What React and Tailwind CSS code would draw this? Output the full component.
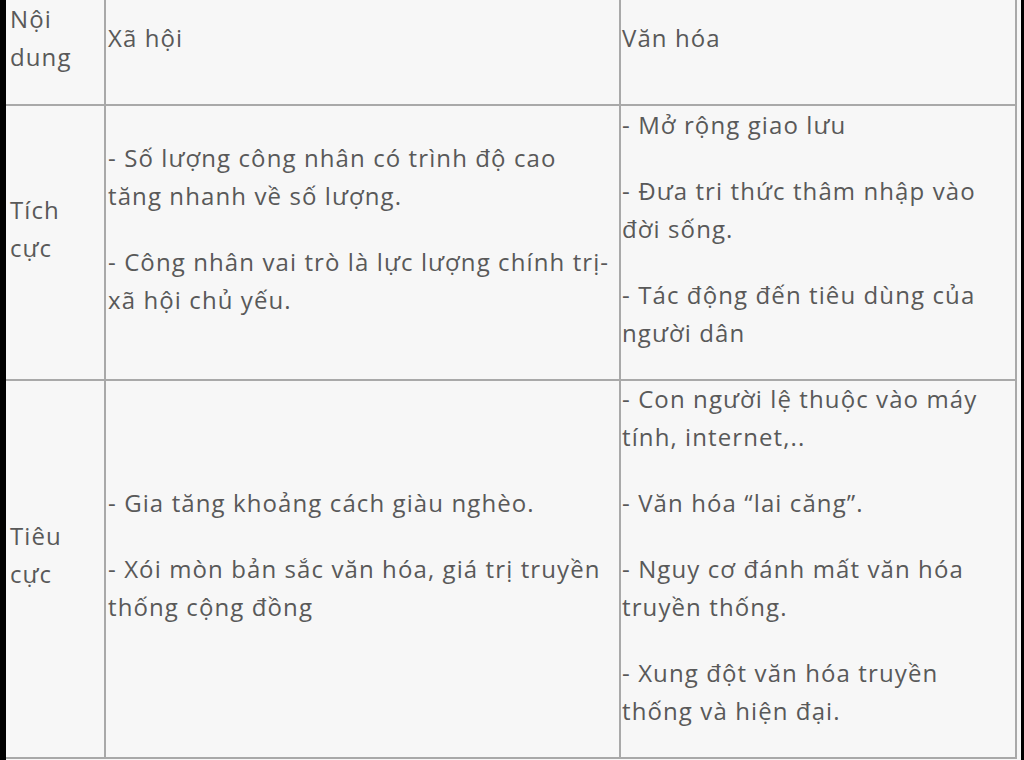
import React from 'react';

const rows = [
  {
    label: ['Nội', 'dung'],
    social: [['Xã hội']],
    culture: [['Văn hóa']],
  },
  {
    label: ['Tích', 'cực'],
    social: [
      ['- Số lượng công nhân có trình độ cao', 'tăng nhanh về số lượng.'],
      ['- Công nhân vai trò là lực lượng chính trị-', 'xã hội chủ yếu.'],
    ],
    culture: [
      ['- Mở rộng giao lưu'],
      ['- Đưa tri thức thâm nhập vào', 'đời sống.'],
      ['- Tác động đến tiêu dùng của', 'người dân'],
    ],
  },
  {
    label: ['Tiêu', 'cực'],
    social: [
      ['- Gia tăng khoảng cách giàu nghèo.'],
      ['- Xói mòn bản sắc văn hóa, giá trị truyền', 'thống cộng đồng'],
    ],
    culture: [
      ['- Con người lệ thuộc vào máy', 'tính, internet,..'],
      ['- Văn hóa “lai căng”.'],
      ['- Nguy cơ đánh mất văn hóa', 'truyền thống.'],
      ['- Xung đột văn hóa truyền', 'thống và hiện đại.'],
    ],
  },
];

const rowHeights = ['h-[106px]', 'h-[275px]', 'h-[378px]'];

function Para({ lines }) {
  return (
    <p className="mb-[28px] whitespace-nowrap">
      {lines.map((l, i) => (
        <span key={i} className="block">{l}</span>
      ))}
    </p>
  );
}

function Cell({ paras, pad, height }) {
  return (
    <div className={`flex flex-col justify-center border-r-2 border-b-2 border-[#a9a9a9] ${pad} ${height}`}>
      {paras.map((p, i) => (
        <Para key={i} lines={p} />
      ))}
    </div>
  );
}

export default function App() {
  return (
    <div className="w-[1024px] h-[760px] bg-black pl-[6px] pr-[3px] overflow-hidden">
      <div
        className="h-full bg-[#f7f7f7] pr-[4px] text-[24px] leading-[38px] tracking-[1.1px] text-[#595959]"
        style={{ fontFamily: '"Open Sans", "Noto Sans", sans-serif' }}
      >
        <div className="grid grid-cols-[100px_515px_396px]">
          {rows.map((r, i) => (
            <React.Fragment key={i}>
              <Cell paras={[r.label]} pad="pl-[4px]" height={rowHeights[i]} />
              <Cell paras={r.social} pad="pl-[2px]" height={rowHeights[i]} />
              <Cell paras={r.culture} pad="pl-[1px]" height={rowHeights[i]} />
            </React.Fragment>
          ))}
        </div>
      </div>
    </div>
  );
}
